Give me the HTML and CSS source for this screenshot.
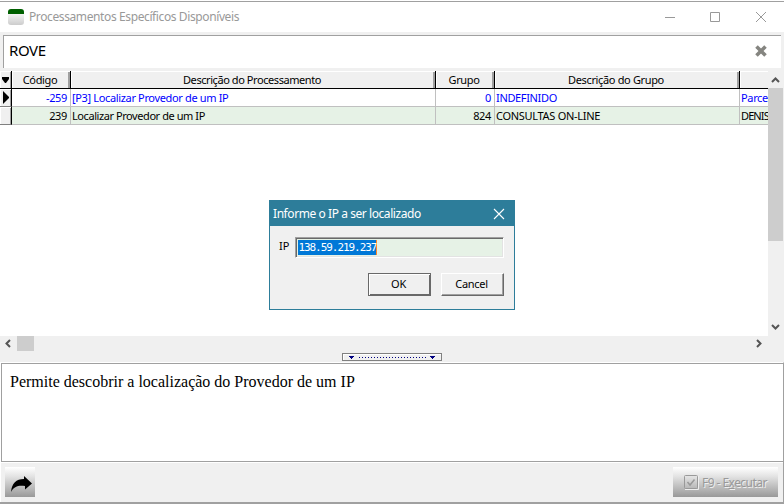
FILE: index.html
```
<!DOCTYPE html>
<html lang="pt-BR">
<head>
<meta charset="utf-8">
<title>Processamentos Específicos Disponíveis</title>
<link rel="stylesheet" href="styles.css">
</head>
<body>
<div class="window">
  <header class="titlebar">
    <span class="app-icon"></span>
    <span class="title">Processamentos Específicos Disponíveis</span>
    <svg class="win-controls" width="112" height="12" viewBox="0 0 112 12" fill="none" stroke="#999"><path d="M1 6.5h10M46.500 1.500h9v9h-9zM92 1l10 10M102 1L92 11"/></svg>
  </header>
  <div class="search-strip">
    <div class="search"><span class="query">ROVE</span>
      <svg width="12" height="12" viewBox="0 0 12 12" stroke="#858580" stroke-width="3.600"><path d="M1.500 1.500l9 9M10.500 1.500l-9 9"/></svg>
    </div>
  </div>
  <main class="grid-area">
    <div class="table">
      <div class="row head">
        <div class="cell mark"><svg width="11" height="17"><path d="M2 6h7v2L6 12H5L2 8z"/></svg></div>
        <div class="cell">Código</div><div class="cell name">Descrição do Processamento</div><div class="cell">Grupo</div><div class="cell">Descrição do Grupo</div><div class="cell last"></div>
      </div>
      <div class="row selected">
        <div class="cell mark"><svg width="11" height="17"><path d="M3 2l6 6v1l-6 6z"/></svg></div>
        <div class="cell num">-259</div><div class="cell">[P3] Localizar Provedor de um IP</div><div class="cell num">0</div><div class="cell">INDEFINIDO</div><div class="cell last">Parce</div>
      </div>
      <div class="row alt">
        <div class="cell mark"></div>
        <div class="cell num">239</div><div class="cell name">Localizar Provedor de um IP</div><div class="cell num">824</div><div class="cell caps">CONSULTAS ON-LINE</div><div class="cell last tight">DENIS</div>
      </div>
    </div>
    <div class="vscroll">
      <svg width="15" height="17" viewBox="0 0 15 17" fill="none" stroke="#555" stroke-width="2"><path d="M4 11l3.500-3.500L11 11"/></svg>
      <span class="vthumb"></span>
      <svg width="15" height="17" viewBox="0 0 15 17" fill="none" stroke="#555" stroke-width="2"><path d="M4 6l3.500 3.500L11 6"/></svg>
    </div>
  </main>
  <div class="hscroll">
    <svg width="17" height="15" viewBox="0 0 17 15" fill="none" stroke="#555" stroke-width="2"><path d="M10 4L6.500 7.500 10 11"/></svg>
    <span class="hthumb"></span>
    <svg class="right" width="17" height="15" viewBox="0 0 17 15" fill="none" stroke="#555" stroke-width="2"><path d="M6 4l3.500 3.500L6 11"/></svg>
  </div>
  <div class="splitter">
    <svg width="100" height="8" viewBox="0 0 100 8" shape-rendering="crispEdges"><path d="M.5.5h99v7H.5z" fill="#f0f0f0" stroke="#808080"/><path d="M1.500 6.500v-5h97" fill="none" stroke="#fff"/><path d="M7 3h5v1h-1v1h-1v1H9V5H8V4H7zM88 3h5v1h-1v1h-1v1h-1V5h-1V4h-1z" fill="#000080"/><path d="M17 4.500h68" stroke="#000080" stroke-dasharray="1 2"/></svg>
  </div>
  <div class="lower">
    <section class="memo">Permite descobrir a localização do Provedor de um IP</section>
    <footer class="footer">
      <div class="tool"><svg width="30" height="30" viewBox="0 0 30 30"><path d="M6 25C7 16 11 12 19 12V9l8 7.500-7 6V19C14 18 9 19 6 25z"/></svg></div>
      <div class="execute">
        <svg width="16" height="16" viewBox="0 0 16 16" fill="none"><path d="M15.500 2v13.500H2" stroke="#eee"/><rect x="1.500" y="1.500" width="13" height="13" rx="1" stroke="#999"/><path d="M4.500 8l2.500 3L11.500 5.500" stroke="#999" stroke-width="1.500"/></svg>
        <span>F9 - E<u>x</u>ecutar</span>
      </div>
    </footer>
  </div>
  <div class="dialog">
    <div class="dialog-title"><span>Informe o IP a ser localizado</span><svg width="12" height="12" viewBox="0 0 12 12" stroke="#fff" stroke-width="1.100"><path d="M1 1l10 10M11 1L1 11"/></svg></div>
    <div class="field"><label>IP</label><div class="input"><span class="selection">138.59.219.237</span></div></div>
    <div class="buttons"><div class="button default">OK</div><div class="button">Cancel</div></div>
  </div>
</div>
</body>
</html>
```
FILE: styles.css
```
* { box-sizing: border-box; }
body { margin: 0; font: 11px/17px "Noto Sans", sans-serif; color: #000; }
svg { display: block; flex: none; }
.window { position: relative; width: 784px; height: 504px; overflow: hidden; background: #f0f0f0; display: flex; flex-direction: column; border-bottom: 2px solid #a0a0a0; }
.titlebar { flex: none; height: 32px; background: linear-gradient(#fff 1px, #a0a0a0 1px 2px, #fff 2px); display: flex; align-items: center; padding: 1px 0 0 8px; color: #999; }
.app-icon { width: 16px; height: 16px; border-radius: 3px; background: linear-gradient(#006000 5px, #f4f4f4 5px, #ccc); }
.title { margin-left: 5px; font-size: 12px; letter-spacing: -.39px; white-space: nowrap; }
.win-controls { margin-left: auto; margin-right: 8px; }
.search-strip { flex: none; height: 39px; padding: 3px; }
.search { height: 33px; border-top: 1px solid #a0a0a0; border-left: 1px solid #a0a0a0; background: #fff; display: flex; align-items: center; justify-content: space-between; padding: 0 14px 3px 5px; }
.query { font-size: 15px; letter-spacing: -.4px; }
.grid-area { flex: none; height: 265px; display: flex; }
.table { width: 768px; background: #fff; overflow: hidden; }
.row { display: grid; grid-template-columns: 12px 59px 365px 59px 245px 28px; height: 18px; }
.cell { height: 18px; border-right: 1px solid #c0c0c0; border-bottom: 1px solid #c0c0c0; padding: 0 1px; white-space: nowrap; overflow: hidden; letter-spacing: -.35px; }
.cell.last { border-right: 0; }
.cell.name { letter-spacing: -.43px; }
.cell.tight { letter-spacing: -.9px; }
.cell.caps { letter-spacing: -.29px; }
.head .cell { background: #f0f0f0; border-color: #000; text-align: center; padding-right: 3px; box-shadow: inset 1px 1px #fff, inset -2px 0 #a0a0a0; }
.head .last { box-shadow: inset 1px 1px #fff; }
.row .mark { padding: 0; background: #f0f0f0; border-color: #000; box-shadow: inset 1px 1px #fff, inset -1px 0 #a0a0a0; }
.cell.num { text-align: right; padding-right: 3px; }
.selected { color: #00f; }
.selected .mark, .alt .mark { border-bottom-color: #808080; }
.alt { background: #e6f2e6; }
.vscroll { width: 16px; display: flex; flex-direction: column; }
.vthumb { height: 153px; width: 15px; background: #cdcdcd; margin-bottom: auto; }
.hscroll { flex: none; height: 15px; display: flex; width: 768px; }
.hthumb { width: 17px; background: #cdcdcd; }
.right { margin-left: auto; }
.splitter { flex: none; height: 11px; padding: 2px 0 0 342px; }
.lower { flex: 1; border-top: 1px solid #fff; border-left: 1px solid #fff; border-right: 1px solid #a0a0a0; }
.memo { height: 99px; border: solid #a0a0a0; border-width: 1px 0 1px 1px; background: #fff; padding: 8px; font: 16px/19px "Liberation Serif", serif; }
.footer { height: 40px; border-top: 1px solid #fff; display: flex; justify-content: space-between; padding: 4px 5px 5px 4px; }
.tool, .execute { height: 30px; background: linear-gradient(#fff, #e4e4e4 30%, #999); }
.tool { width: 30px; }
.execute { width: 105px; display: flex; align-items: center; padding-left: 10px; gap: 3px; color: #999; text-shadow: 1px 1px #eee; font-size: 12px; letter-spacing: -.55px; white-space: nowrap; }
.dialog { position: absolute; left: 269px; top: 200px; width: 246px; height: 110px; border: 1px solid #2d7d9a; background: #f0f0f0; }
.dialog-title { height: 25px; background: #2d7d9a; color: #fff; display: flex; align-items: center; justify-content: space-between; padding: 0 9px 0 3px; font-size: 12px; letter-spacing: -.43px; }
.field { display: flex; margin: 11px 10px 0 9px; gap: 6px; }
.input { flex: 1; height: 21px; background: #e6f2e6; border: 1px solid; border-color: #a0a0a0 #fff #fff #a0a0a0; box-shadow: inset 1px 1px #696969, inset -1px -1px #e3e3e3; padding: 2px; display: flex; }
.selection { height: 15px; font: 11px/15px "DejaVu Sans Mono", monospace; letter-spacing: -1.05px; background: #0078d7; color: #fff; border-right: 1px solid #ff8728; }
.buttons { display: flex; justify-content: flex-end; margin: 15px 10px 0 0; gap: 10px; }
.button { width: 63px; height: 23px; text-align: center; line-height: 20px; border: 1px solid; border-color: #fff #696969 #696969 #fff; box-shadow: inset -1px -1px #a0a0a0; letter-spacing: -.3px; padding-right: 2px; }
.button.default { border-color: #696969; box-shadow: inset 1px 1px #fff, inset -1px -1px #696969; }
```
